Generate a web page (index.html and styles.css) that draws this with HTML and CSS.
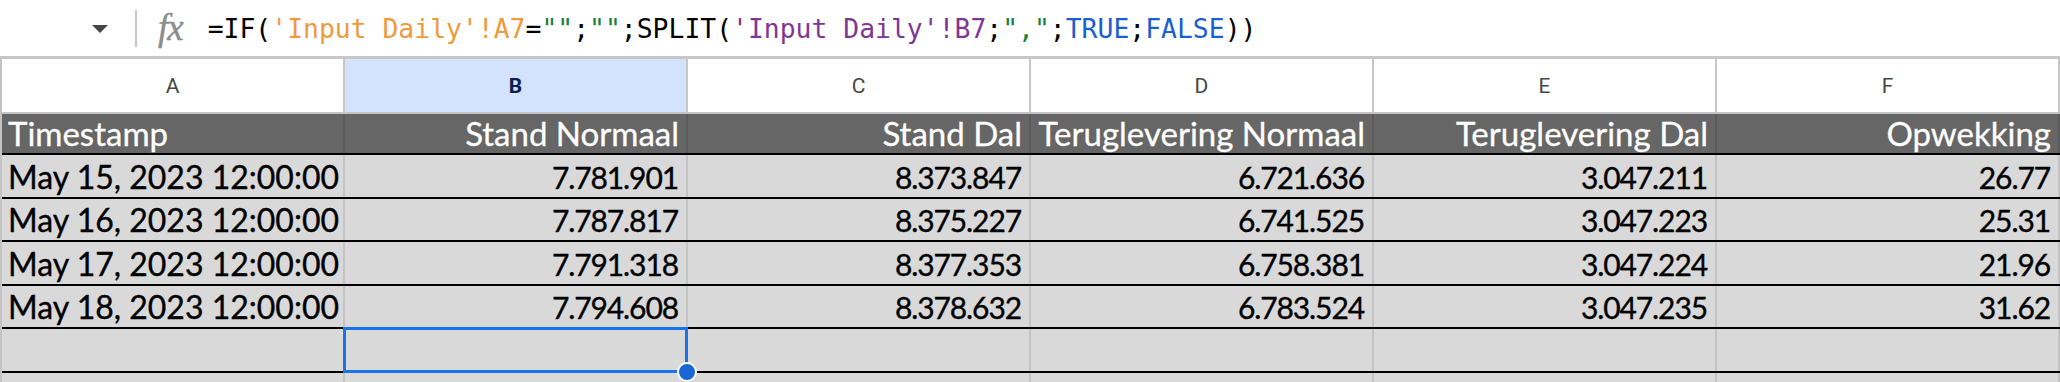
FILE: index.html
```html
<!DOCTYPE html>
<html>
<head>
<meta charset="utf-8">
<link rel="stylesheet" href="styles.css">
</head>
<body>
<div class="formula-bar">
  <span class="dd"></span>
  <span class="sep"></span>
  <span class="fx">fx</span>
  <span class="formula">=IF(<span class="r1">'Input Daily'!A7</span>=<span class="str">""</span>;<span class="str">""</span>;SPLIT(<span class="r2">'Input Daily'!B7</span>;<span class="str">","</span>;<span class="bool">TRUE</span>;<span class="bool">FALSE</span>))</span>
</div>
<div class="sheet">
  <div class="row colhdr">
    <div class="c">A</div><div class="c sel">B</div><div class="c">C</div><div class="c">D</div><div class="c">E</div><div class="c">F</div>
  </div>
  <div class="row head">
    <div class="c l">Timestamp</div><div class="c">Stand Normaal</div><div class="c">Stand Dal</div><div class="c">Teruglevering Normaal</div><div class="c">Teruglevering Dal</div><div class="c">Opwekking</div>
  </div>
  <div class="row data">
    <div class="c l">May 15, 2023 12:00:00</div><div class="c n">7.781.901</div><div class="c n">8.373.847</div><div class="c n">6.721.636</div><div class="c n">3.047.211</div><div class="c n">26.77</div>
  </div>
  <div class="row data">
    <div class="c l">May 16, 2023 12:00:00</div><div class="c n">7.787.817</div><div class="c n">8.375.227</div><div class="c n">6.741.525</div><div class="c n">3.047.223</div><div class="c n">25.31</div>
  </div>
  <div class="row data">
    <div class="c l">May 17, 2023 12:00:00</div><div class="c n">7.791.318</div><div class="c n">8.377.353</div><div class="c n">6.758.381</div><div class="c n">3.047.224</div><div class="c n">21.96</div>
  </div>
  <div class="row data">
    <div class="c l">May 18, 2023 12:00:00</div><div class="c n">7.794.608</div><div class="c n">8.378.632</div><div class="c n">6.783.524</div><div class="c n">3.047.235</div><div class="c n">31.62</div>
  </div>
  <div class="row data">
    <div class="c"></div><div class="c active"><span class="handle"></span></div><div class="c"></div><div class="c"></div><div class="c"></div><div class="c"></div>
  </div>
  <div class="row data tail">
    <div class="c"></div><div class="c"></div><div class="c"></div><div class="c"></div><div class="c"></div><div class="c"></div>
  </div>
</div>
</body>
</html>
```
FILE: styles.css
```css
* { box-sizing: border-box; }
html, body {
  margin: 0;
  padding: 0;
  width: 2060px;
  height: 382px;
  overflow: hidden;
  background: #ffffff;
}
.formula-bar {
  height: 56px;
  display: flex;
  align-items: center;
  background: #ffffff;
}
.dd {
  width: 0;
  height: 0;
  margin-left: 92px;
  margin-top: 2px;
  border-left: 8px solid transparent;
  border-right: 8px solid transparent;
  border-top: 8px solid #444746;
}
.sep {
  width: 2px;
  height: 37px;
  margin-left: 27px;
  background: #c7c7c7;
}
.fx {
  margin-left: 21px;
  font-family: "Liberation Serif", serif;
  font-style: italic;
  font-size: 37px;
  color: #8c8c8c;
  letter-spacing: -1px;
  line-height: 1;
  margin-top: -2px;
  -webkit-text-stroke: 0.4px #8c8c8c;
}
.formula {
  margin-left: 25px;
  font-family: "DejaVu Sans Mono", monospace;
  font-size: 26.4px;
  color: #000000;
  white-space: pre;
  margin-top: 1px;
}
.r1 { color: #f09a3e; }
.r2 { color: #7e3794; }
.str { color: #188038; }
.bool { color: #1a5fd0; }

.sheet {
  border-top: 3px solid #c7c7c7;
  border-left: 2px solid #c4c4c4;
  background: #d9d9d9;
}
.row {
  display: grid;
  grid-template-columns: repeat(6, 343px);
}
.c {
  border-right: 2px solid #c4c4c4;
  display: flex;
  align-items: flex-end;
  justify-content: flex-end;
  padding: 0 7px 2px 6px;
  white-space: nowrap;
  font-family: Lato, "Open Sans", sans-serif;
  font-size: 32px;
  line-height: 36px;
}
.c.l { justify-content: flex-start; }
.c.n {
  font-size: 30px;
  letter-spacing: -1.1px;
  padding-right: 8px;
}

.colhdr {
  height: 55px;
  background: #ffffff;
  border-bottom: 2px solid #c4c4c4;
}
.colhdr .c {
  justify-content: center;
  align-items: center;
  padding: 0;
  font-family: Roboto, "Liberation Sans", sans-serif;
  font-size: 21px;
  color: #444746;
  border-right-color: #c7c7c7;
}
.colhdr .c.sel {
  background: #d3e3fd;
  color: #0b1f4f;
  font-weight: 700;
}

.head {
  height: 41px;
  background: #666666;
  border-bottom: 2px solid #000000;
}
.head .c {
  color: #ffffff;
  font-size: 33px;
  border-right-color: #5b5b5b;
  -webkit-text-stroke: 0.3px #ffffff;
}

.data {
  height: 43.6px;
  border-bottom: 2px solid #000000;
}
.data .c {
  color: #000000;
  -webkit-text-stroke: 0.35px #000000;
}
.tail {
  height: 12px;
  border-bottom: none;
}

.active { position: relative; }
.active::after {
  content: "";
  position: absolute;
  left: -2px;
  top: -2px;
  right: -2px;
  bottom: -2px;
  border: 3px solid #1a73e8;
}
.handle {
  position: absolute;
  right: -11px;
  bottom: -11px;
  width: 20px;
  height: 20px;
  border-radius: 50%;
  background: #1b66d6;
  border: 2px solid #ffffff;
  z-index: 2;
}
```
